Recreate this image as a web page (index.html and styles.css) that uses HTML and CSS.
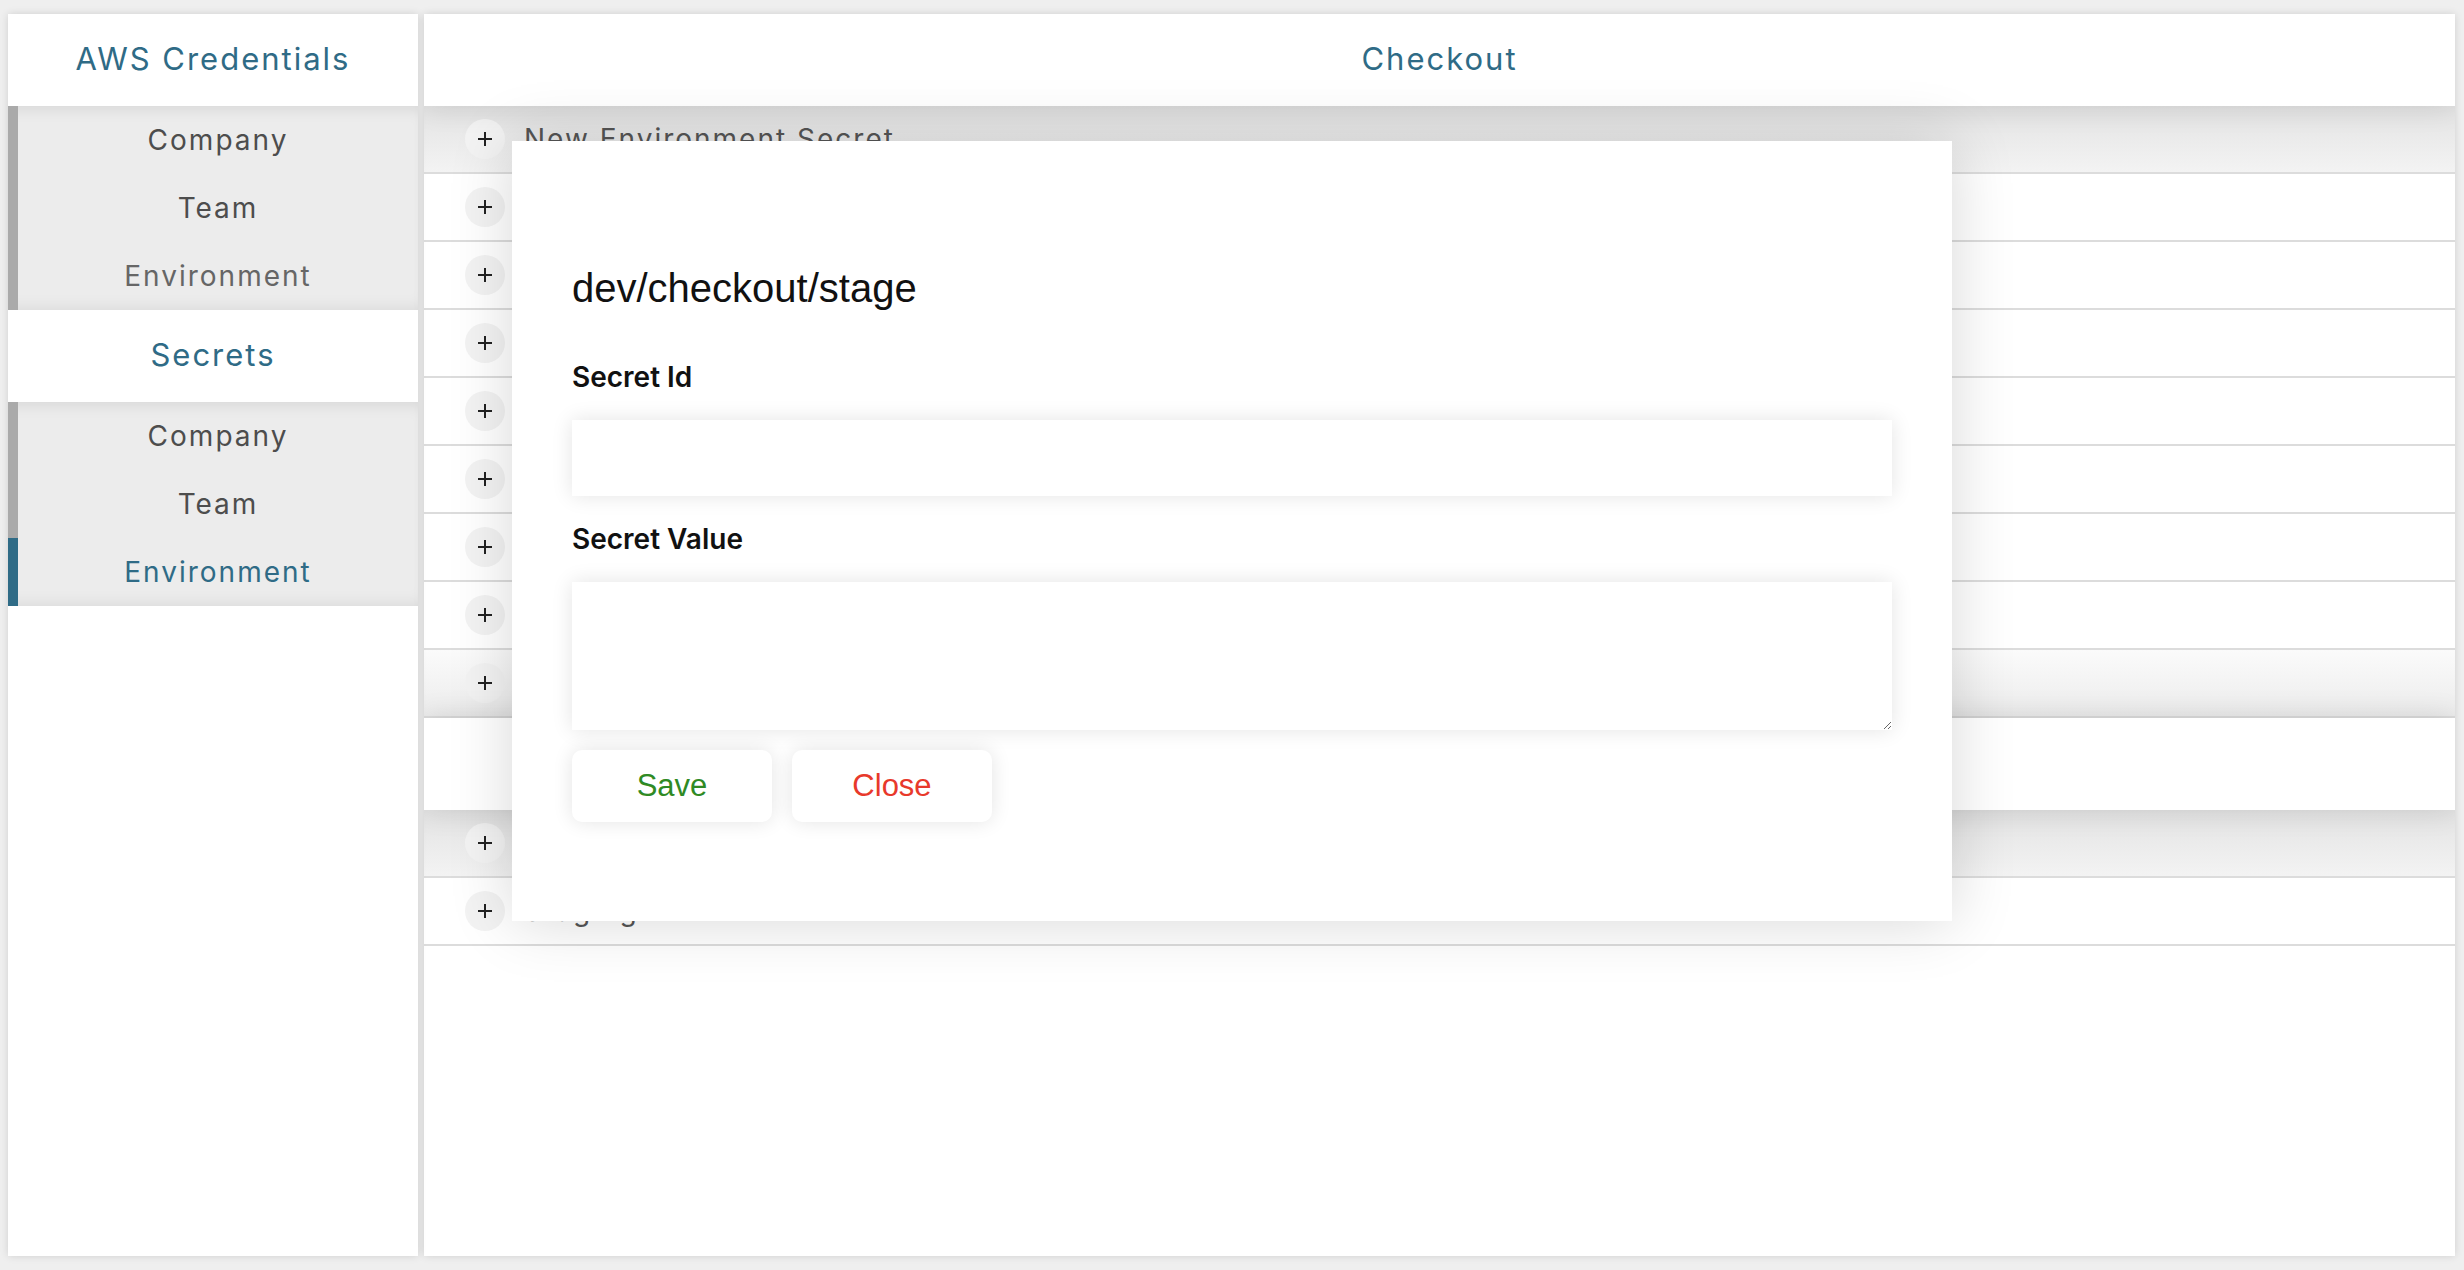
FILE: index.html
```html
<!DOCTYPE html>
<html lang="en">
<head>
<meta charset="utf-8">
<title>Secrets - Checkout</title>
<link rel="stylesheet" href="styles.css">
</head>
<body>
<div class="app">
  <aside class="sidebar">
    <section class="nav-group">
      <div class="nav-title">AWS Credentials</div>
      <ul class="nav-list">
        <li class="nav-item">Company</li>
        <li class="nav-item">Team</li>
        <li class="nav-item nav-item-muted">Environment</li>
      </ul>
    </section>
    <section class="nav-group">
      <div class="nav-title">Secrets</div>
      <ul class="nav-list">
        <li class="nav-item">Company</li>
        <li class="nav-item">Team</li>
        <li class="nav-item nav-item-active">Environment</li>
      </ul>
    </section>
  </aside>

  <main class="main">
    <section class="group">
      <div class="group-header">Checkout</div>
      <div class="row row-new"><span class="add"><svg viewBox="0 0 14 14" width="14" height="14"><path d="M7 0v14M0 7h14" stroke="#222" stroke-width="2"/></svg></span><span class="row-text">New Environment Secret</span></div>
      <div class="row"><span class="add"><svg viewBox="0 0 14 14" width="14" height="14"><path d="M7 0v14M0 7h14" stroke="#222" stroke-width="2"/></svg></span></div>
      <div class="row"><span class="add"><svg viewBox="0 0 14 14" width="14" height="14"><path d="M7 0v14M0 7h14" stroke="#222" stroke-width="2"/></svg></span></div>
      <div class="row"><span class="add"><svg viewBox="0 0 14 14" width="14" height="14"><path d="M7 0v14M0 7h14" stroke="#222" stroke-width="2"/></svg></span></div>
      <div class="row"><span class="add"><svg viewBox="0 0 14 14" width="14" height="14"><path d="M7 0v14M0 7h14" stroke="#222" stroke-width="2"/></svg></span></div>
      <div class="row"><span class="add"><svg viewBox="0 0 14 14" width="14" height="14"><path d="M7 0v14M0 7h14" stroke="#222" stroke-width="2"/></svg></span></div>
      <div class="row"><span class="add"><svg viewBox="0 0 14 14" width="14" height="14"><path d="M7 0v14M0 7h14" stroke="#222" stroke-width="2"/></svg></span></div>
      <div class="row"><span class="add"><svg viewBox="0 0 14 14" width="14" height="14"><path d="M7 0v14M0 7h14" stroke="#222" stroke-width="2"/></svg></span></div>
      <div class="row row-last"><span class="add"><svg viewBox="0 0 14 14" width="14" height="14"><path d="M7 0v14M0 7h14" stroke="#222" stroke-width="2"/></svg></span></div>
    </section>
    <section class="group">
      <div class="group-header"></div>
      <div class="row row-new"><span class="add"><svg viewBox="0 0 14 14" width="14" height="14"><path d="M7 0v14M0 7h14" stroke="#222" stroke-width="2"/></svg></span></div>
      <div class="row"><span class="add"><svg viewBox="0 0 14 14" width="14" height="14"><path d="M7 0v14M0 7h14" stroke="#222" stroke-width="2"/></svg></span><span class="row-text">Staging</span></div>
    </section>
  </main>
</div>

<div class="modal">
  <h2 class="modal-title">dev/checkout/stage</h2>
  <label class="field-label" for="secret-id">Secret Id</label>
  <input class="field-input" id="secret-id" type="text">
  <label class="field-label field-label-second" for="secret-value">Secret Value</label>
  <textarea class="field-input field-textarea" id="secret-value"></textarea>
  <div class="actions">
    <button class="btn btn-save" type="button">Save</button>
    <button class="btn btn-close" type="button">Close</button>
  </div>
</div>
</body>
</html>
```

FILE: styles.css
```css
html, body {
  margin: 0;
  height: 100%;
}

body {
  background: #efefef;
  font-family: Inter, "DejaVu Sans", sans-serif;
  overflow: hidden;
}

.app {
  display: flex;
  gap: 6px;
  height: 100vh;
  box-sizing: border-box;
  padding: 14px 9px 14px 8px;
}

/* Sidebar */
.sidebar {
  width: 410px;
  flex: none;
  background: #fff;
  box-shadow: 0 0 8px rgba(0, 0, 0, 0.13);
  position: relative;
  z-index: 1;
}

.nav-title {
  height: 92px;
  box-sizing: border-box;
  padding-bottom: 4px;
  display: flex;
  align-items: center;
  justify-content: center;
  font-size: 31px;
  letter-spacing: 2px;
  color: #2f6b86;
}

.nav-list {
  list-style: none;
  margin: 0;
  padding: 0;
  background: #ececec;
  box-shadow: inset 0 12px 16px -10px rgba(0, 0, 0, 0.1), inset 0 -12px 16px -10px rgba(0, 0, 0, 0.08);
}

.nav-item {
  height: 68px;
  display: flex;
  align-items: center;
  justify-content: center;
  border-left: 10px solid #aaaaaa;
  font-size: 28px;
  letter-spacing: 2px;
  color: #4d4d4d;
}

.nav-item-muted {
  color: #666;
}

.nav-item-active {
  border-left-color: #2f6b86;
  color: #2f6b86;
}

/* Main */
.main {
  flex: 1;
  background: #fff;
  box-shadow: 0 0 8px rgba(0, 0, 0, 0.13);
  overflow: hidden;
}

.group-header {
  height: 92px;
  box-sizing: border-box;
  padding-bottom: 4px;
  display: flex;
  align-items: center;
  justify-content: center;
  font-size: 31px;
  letter-spacing: 2px;
  color: #2f6b86;
  background: #fff;
  position: relative;
  z-index: 1;
  box-shadow: 0 0 30px rgba(0, 0, 0, 0.12);
}

.row {
  height: 66px;
  border-bottom: 2px solid #dcdcdc;
  display: flex;
  align-items: center;
  gap: 19px;
  padding-left: 41px;
  font-size: 28px;
  letter-spacing: 2px;
  color: #555;
  background: #fff;
}

.row-new {
  background: linear-gradient(#e3e3e3, #f3f3f3);
}

.row-last {
  background: linear-gradient(#fbfbfb, #ececec);
}

.add {
  width: 40px;
  height: 40px;
  flex: none;
  border-radius: 50%;
  background: #f3f3f3;
  display: flex;
  align-items: center;
  justify-content: center;
}

.row-text {
  white-space: nowrap;
}

/* Modal */
.modal {
  position: absolute;
  left: 512px;
  top: 141px;
  width: 1440px;
  height: 780px;
  box-sizing: border-box;
  padding: 124px 60px 0;
  background: #fff;
  box-shadow: 0 0 60px rgba(0, 0, 0, 0.16);
  z-index: 10;
}

.modal-title {
  margin: 0;
  font: 400 40px/46px "Liberation Sans", Arial, sans-serif;
  color: #111;
}

.field-label {
  display: block;
  margin-top: 49px;
  font: 600 28px/34px Inter, sans-serif;
  color: #111;
}

.field-label-second {
  margin-top: 26px;
}

.field-input {
  display: block;
  margin: 26px 0 0;
  width: 100%;
  height: 76px;
  box-sizing: border-box;
  border: none;
  outline: none;
  background: #fff;
  box-shadow: 0 0 20px rgba(0, 0, 0, 0.11);
  font: 24px "Liberation Sans", Arial, sans-serif;
  padding: 0 16px;
}

.field-textarea {
  height: 148px;
  padding: 12px 16px;
  resize: vertical;
}

.actions {
  display: flex;
  gap: 20px;
  margin-top: 20px;
}

.btn {
  width: 200px;
  height: 72px;
  border: none;
  border-radius: 10px;
  background: #fff;
  box-shadow: 0 0 20px rgba(0, 0, 0, 0.11);
  font: 31px "Liberation Sans", Arial, sans-serif;
  padding: 0;
}

.btn-save {
  color: #2f8a24;
}

.btn-close {
  color: #e8392b;
}
```
